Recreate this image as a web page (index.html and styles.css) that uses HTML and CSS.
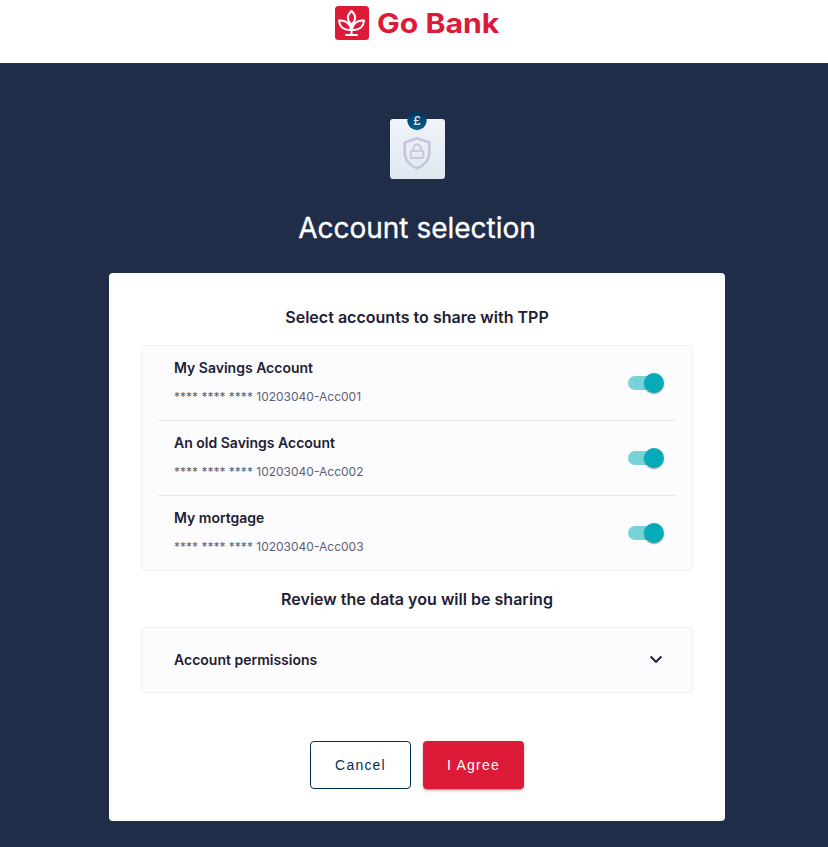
FILE: index.html
```html
<!DOCTYPE html>
<html lang="en">
<head>
<meta charset="utf-8">
<title>Go Bank</title>
<link rel="stylesheet" href="styles.css">
</head>
<body>
<header class="header">
  <svg class="logo-mark" viewBox="0 0 34 34" width="34" height="34">
    <rect width="34" height="34" rx="3.5" fill="#dd1a38"/>
    <g fill="none" stroke="#fff" stroke-width="2" stroke-linecap="round" stroke-linejoin="round">
      <path d="M16.500 5C11.600 9.500 11.600 14 16.500 18.500C21.400 14 21.400 9.500 16.500 5Z"/>
      <path d="M4 14.500C10.500 14 15.500 17.500 16.500 24C9 24.500 4.500 21 4 14.500Z"/>
      <path d="M29 14.500C22.500 14 17.500 17.500 16.500 24C24 24.500 28.500 21 29 14.500Z"/>
      <path d="M16.500 18V29M11 29H22"/>
    </g>
  </svg>
  <span class="logo-name">Go Bank</span>
</header>
<main class="main">
  <svg class="hero" viewBox="0 0 56 70" width="56" height="70">
    <defs>
      <linearGradient id="paper" x1="0" y1="0" x2="0" y2="1"><stop offset="0" stop-color="#f0f4fa"/><stop offset="1" stop-color="#dfe8f0"/></linearGradient>
      <linearGradient id="coin" x1="0" y1="0" x2="0" y2="1"><stop offset="0" stop-color="#003153"/><stop offset="1" stop-color="#0b6298"/></linearGradient>
    </defs>
    <rect x="1" y="9" width="55" height="60" rx="3" fill="url(#paper)"/>
    <circle cx="28" cy="10.500" r="9.700" fill="url(#coin)"/>
    <text class="pound" x="28" y="14.700" text-anchor="middle">£</text>
    <g fill="none" stroke="#c6c7dc" stroke-linejoin="round">
      <path stroke-width="2.700" d="M28 28.200L40.300 32.500V42.500C40.300 49.500 35.500 55.500 28 58.300C20.500 55.500 15.700 49.500 15.700 42.500V32.500Z"/>
      <rect stroke-width="1.800" x="21.800" y="40.800" width="12.600" height="7.200" rx="1"/>
      <path stroke-width="1.800" d="M24.300 40.800V38.300A3.800 3.800 0 0 1 31.900 38.300V40.800"/>
    </g>
  </svg>
  <h1 class="title">Account selection</h1>
  <section class="card">
    <h2 class="subtitle">Select accounts to share with TPP</h2>
    <ul class="panel accounts">
      <li class="account"><div class="details"><h3 class="name">My Savings Account</h3><p class="number">**** **** **** 10203040-Acc001</p></div><span class="switch"></span></li>
      <li class="account"><div class="details"><h3 class="name">An old Savings Account</h3><p class="number">**** **** **** 10203040-Acc002</p></div><span class="switch"></span></li>
      <li class="account"><div class="details"><h3 class="name">My mortgage</h3><p class="number">**** **** **** 10203040-Acc003</p></div><span class="switch"></span></li>
    </ul>
    <h2 class="subtitle review">Review the data you will be sharing</h2>
    <div class="panel permissions">
      <h3 class="name">Account permissions</h3>
      <svg viewBox="0 0 14 10" width="14" height="10"><path d="M1.600 1.500L7 6.900L12.400 1.500" fill="none" stroke="#1f2033" stroke-width="2"/></svg>
    </div>
    <div class="actions">
      <button class="button cancel">Cancel</button>
      <button class="button agree">I Agree</button>
    </div>
  </section>
</main>
</body>
</html>
```
FILE: styles.css
```css
* { box-sizing: border-box; }
body { margin: 0; height: 847px; overflow: hidden; background: #202d48; font-family: Inter, sans-serif; color: #1f2033; }
h1, h2, h3, p, ul { margin: 0; padding: 0; }
.header { height: 63px; padding: 6px 0 0 335px; background: #fff; display: flex; align-items: flex-start; }
.logo-mark { flex: none; }
.logo-name { margin-left: 8px; color: #dd1a38; font-size: 27px; font-weight: 700; line-height: 36px; white-space: nowrap; transform: scaleX(1.12); transform-origin: left; }
.main { padding: 47px 0 0 6px; display: flex; flex-direction: column; align-items: center; }
.pound { font: 600 12px Inter, sans-serif; fill: #d8e5ee; }
.title { margin-top: 28px; font-size: 28px; font-weight: 400; line-height: 40px; color: #fff; letter-spacing: 0; -webkit-text-stroke: 0.3px #fff; }
.card { margin-top: 25px; width: 616px; height: 548px; padding: 32px; background: #fff; border-radius: 4px; display: flex; flex-direction: column; }
.subtitle { font-size: 16px; font-weight: 600; line-height: 24px; text-align: center; letter-spacing: 0.02px; }
.panel { background: #fcfcfe; border: 1px solid #f2f2f5; border-radius: 4px; }
.accounts { margin-top: 16px; padding: 0 16px; list-style: none; }
.account { height: 75px; padding: 0 12px 0 16px; display: flex; justify-content: space-between; align-items: center; border-bottom: 1px solid #e8e9ed; }
.account:last-child { border-bottom: 0; height: 74px; }
.details { padding-bottom: 3px; }
.name { font-size: 14px; font-weight: 600; line-height: 20px; }
.number { margin-top: 10px; font-size: 12px; line-height: 18px; color: #5d6075; }
.switch { position: relative; width: 36px; height: 14px; }
.switch::before { content: ""; display: block; width: 34px; height: 14px; border-radius: 7px; background: #78d2d9; }
.switch::after { content: ""; position: absolute; right: 0; top: -3px; width: 20px; height: 20px; border-radius: 50%; background: #05abb9; box-shadow: 0 2px 1px -1px rgba(0,0,0,.2), 0 1px 1px rgba(0,0,0,.14), 0 1px 3px rgba(0,0,0,.12); }
.review { margin-top: 16px; }
.permissions { margin-top: 16px; height: 66px; padding: 0 29px 0 32px; display: flex; align-items: center; justify-content: space-between; }
.actions { margin-top: 48px; display: flex; justify-content: center; gap: 12px; }
.button { width: 101px; height: 48px; padding: 0; border-radius: 4px; font: 400 14px "Liberation Sans", sans-serif; letter-spacing: 1.2px; }
.cancel { background: #fff; color: #003153; border: 1px solid #003153; }
.agree { background: #dd1a38; color: #fff; border: 0; box-shadow: 0 3px 1px -2px rgba(0,0,0,.2), 0 2px 2px rgba(0,0,0,.14), 0 1px 5px rgba(0,0,0,.12); }
```
